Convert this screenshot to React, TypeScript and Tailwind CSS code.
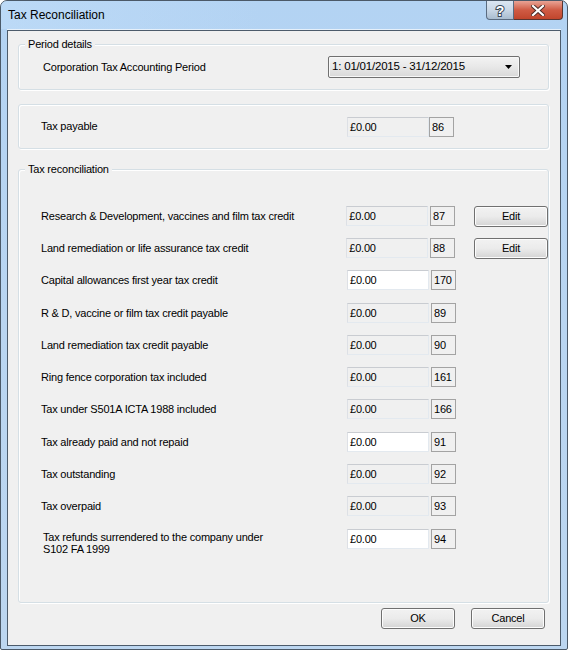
import React from "react";

type Row = {
  label: string;
  label2?: string;
  code: string;
  editable?: boolean;
  edit?: boolean;
  h: string;
};

const rows: Row[] = [
  { label: "Research & Development, vaccines and film tax credit", code: "87", edit: true, h: "h-[32px]" },
  { label: "Land remediation or life assurance tax credit", code: "88", edit: true, h: "h-[32px]" },
  { label: "Capital allowances first year tax credit", code: "170", editable: true, h: "h-[33px]" },
  { label: "R & D, vaccine or film tax credit payable", code: "89", h: "h-[32px]" },
  { label: "Land remediation tax credit payable", code: "90", h: "h-[32px]" },
  { label: "Ring fence corporation tax included", code: "161", h: "h-[32px]" },
  { label: "Tax under S501A ICTA 1988 included", code: "166", h: "h-[33px]" },
  { label: "Tax already paid and not repaid", code: "91", editable: true, h: "h-[32px]" },
  { label: "Tax outstanding", code: "92", h: "h-[32px]" },
  { label: "Tax overpaid", code: "93", h: "h-[33px]" },
  {
    label: "Tax refunds surrendered to the company under",
    label2: "S102 FA 1999",
    code: "94",
    editable: true,
    h: "h-[32px]",
  },
];

function Field({ editable }: { editable?: boolean }) {
  return (
    <div
      className={
        "w-[82px] h-[20px] border border-t-[#c9ccd1] border-l-[#dde0e5] border-r-[#e3e9ef] border-b-[#e3e9ef] pl-[2px] leading-[18px] " +
        (editable ? "bg-white" : "bg-[#f0f0f0]")
      }
    >
      £0.00
    </div>
  );
}

function Code({ code }: { code: string }) {
  return (
    <div className="w-[25px] h-[20px] border border-[#a3a3a3] bg-[#f0f0f0] pl-[2px] leading-[18px]">
      {code}
    </div>
  );
}

function WinButton({ children, w }: { children: React.ReactNode; w: string }) {
  return (
    <div
      className={
        w +
        " h-[21px] rounded-[3px] border border-[#707070] bg-gradient-to-b from-[#f2f2f2] via-[#ebebeb] to-[#d4d4d4] shadow-[inset_0_0_0_1px_#fcfcfc] flex items-center justify-center"
      }
    >
      {children}
    </div>
  );
}

function GroupBox({
  title,
  className,
  children,
}: {
  title?: string;
  className: string;
  children: React.ReactNode;
}) {
  return (
    <div
      className={
        "relative rounded-[3px] border border-[#d5dfe5] shadow-[inset_1px_1px_0_#ffffff,1px_1px_0_#ffffff] " +
        className
      }
    >
      {title && (
        <div className="absolute left-[6px] top-[-8px] bg-[#f0f0f0] px-[3px] leading-[14px]">{title}</div>
      )}
      {children}
    </div>
  );
}

export default function App() {
  return (
    <div
      className="w-[568px] h-[650px] text-[11px] text-black tracking-[-0.2px]"
      style={{ fontFamily: '"Liberation Sans", Arial, sans-serif' }}
    >
      <div className="w-[568px] h-[650px] rounded-t-[7px] rounded-b-[2px] border border-[#4b5968] bg-gradient-to-b from-[#b3d3f3] via-[#b9d5f1] to-[#bcd6f0] flex flex-col">
        {/* title bar */}
        <div className="h-[28px] flex items-start relative shrink-0">
          <div className="absolute left-0 top-0 w-[260px] h-[28px] bg-gradient-to-r from-[#bfdcf8] to-transparent opacity-70 rounded-tl-[6px]" />
          <div className="relative pl-[7px] pt-[6px] text-[12px] leading-[16px] tracking-normal text-black">Tax Reconciliation</div>
          <div className="ml-auto mr-[4px] flex relative">
            <div className="w-[28px] h-[19px] border border-[#5a6b80] border-t-0 rounded-bl-[4px] bg-gradient-to-b from-[#dbe6f2] via-[#c9d7e6] to-[#a9bccf] flex items-center justify-center">
              <svg width="12" height="15" viewBox="0 0 12 15">
                <text
                  x="6"
                  y="12.5"
                  textAnchor="middle"
                  fontSize="14"
                  fontWeight="bold"
                  fontFamily="Liberation Sans, Arial, sans-serif"
                  fill="#ffffff"
                  stroke="#3a4858"
                  strokeWidth="2"
                  paintOrder="stroke"
                >
                  ?
                </text>
              </svg>
            </div>
            <div className="w-[49px] h-[19px] border border-[#5a3530] border-t-0 border-l-0 rounded-br-[4px] bg-gradient-to-b from-[#e8a395] via-[#cf5b44] to-[#c1452c] flex items-center justify-center">
              <svg width="14" height="11" viewBox="0 0 14 11">
                <path d="M2 1 L12 10 M12 1 L2 10" stroke="#4a2a26" strokeWidth="4" strokeLinecap="square" />
                <path d="M2 1 L12 10 M12 1 L2 10" stroke="#ffffff" strokeWidth="2.2" strokeLinecap="square" />
              </svg>
            </div>
          </div>
        </div>
        <div className="h-px bg-[#e6f0fa] mx-[6px] shrink-0" />
        {/* client */}
        <div className="mx-[6px] h-[616px] border border-[#4c5b6b] bg-[#f0f0f0] flex flex-col pt-[13px]">
          <GroupBox title="Period details" className="ml-[10px] w-[531px] h-[46px] shrink-0">
            <div className="flex items-center h-full pl-[24px] pr-[28px]">
              <div>Corporation Tax Accounting Period</div>
              <div className="ml-auto w-[192px] h-[22px] rounded-[2px] border border-[#707070] bg-gradient-to-b from-[#f3f3f3] via-[#e8e8e8] to-[#d9d9d9] shadow-[inset_0_0_0_1px_#f8f8f8] flex items-center pl-[3px] pr-[7px]">
                <span className="text-[11.5px]">1: 01/01/2015 - 31/12/2015</span>
                <svg className="ml-auto" width="7" height="4" viewBox="0 0 7 4">
                  <path d="M0 0 H7 L3.5 4 Z" fill="#000" />
                </svg>
              </div>
            </div>
          </GroupBox>

          <GroupBox className="ml-[10px] mt-[14px] w-[531px] h-[45px] shrink-0">
            <div className="flex items-center h-full pl-[22px]">
              <div className="w-[306px]">Tax payable</div>
              <Field />
              <Code code="86" />
            </div>
          </GroupBox>

          <GroupBox title="Tax reconciliation" className="ml-[10px] mt-[20px] w-[531px] h-[434px] shrink-0">
            <div className="flex flex-col pt-[36px]">
              {rows.map((r) => (
                <div key={r.code} className={r.h + " flex items-start pl-[22px]"}>
                  {r.label2 ? (
                    <div className="w-[306px] pl-[2px] pt-[2px] leading-[12px]">
                      <div>{r.label}</div>
                      <div>{r.label2}</div>
                    </div>
                  ) : (
                    <div className="w-[306px] leading-[20px]">{r.label}</div>
                  )}
                  <Field editable={r.editable} />
                  <div className="w-[2px]" />
                  <Code code={r.code} />
                  {r.edit && (
                    <div className="ml-[19px]">
                      <WinButton w="w-[74px]">Edit</WinButton>
                    </div>
                  )}
                </div>
              ))}
            </div>
          </GroupBox>

          <div className="flex justify-end gap-[16px] mt-[5px] pr-[15px]">
            <WinButton w="w-[74px]">OK</WinButton>
            <WinButton w="w-[74px]">Cancel</WinButton>
          </div>
        </div>
      </div>
    </div>
  );
}
